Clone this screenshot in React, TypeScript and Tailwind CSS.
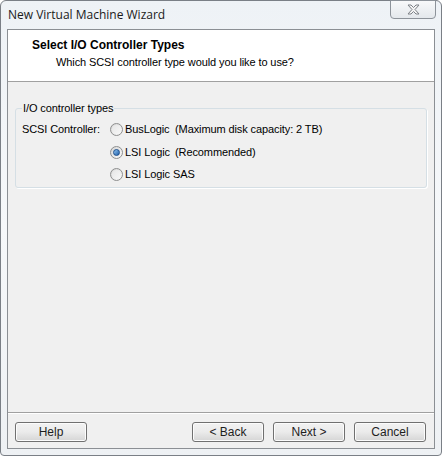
import React from "react";

const font = { fontFamily: '"Liberation Sans", Tahoma, Arial, sans-serif' };

function Radio({ checked }: { checked?: boolean }) {
  return (
    <span className="relative inline-flex h-[13px] w-[13px] shrink-0 items-center justify-center rounded-full border border-[#8e8f8f] bg-gradient-to-br from-[#d6d6d6] to-[#fbfbfb]">
      {checked ? (
        <span className="h-[7px] w-[7px] rounded-full border border-[#1b4e8c] bg-gradient-to-br from-[#8fc3f0] to-[#1e5fa8]" />
      ) : (
        <span className="h-[9px] w-[9px] rounded-full bg-gradient-to-br from-[#e6e6e6] to-[#f7f7f7]" />
      )}
    </span>
  );
}

function Button({ label, className = "" }: { label: string; className?: string }) {
  return (
    <div
      className={`flex h-[20px] w-[72px] shrink-0 items-center justify-center rounded-[3px] border border-[#707070] bg-gradient-to-b from-[#f2f2f2] via-[#ebebeb] to-[#d5d5d5] text-[12px] text-[#1e1e1e] shadow-[inset_0_0_0_1px_#fcfcfc] ${className}`}
    >
      {label}
    </div>
  );
}

export default function App() {
  return (
    <div className="h-[457px] w-[442px] bg-white" style={font}>
      <div className="flex h-[456px] w-[442px] flex-col rounded-t-[6px] rounded-b-[4px] border border-[#7a7f86] bg-gradient-to-b from-[#eef2f6] via-[#f6f8fa] to-[#eef1f4]">
        {/* title bar */}
        <div className="flex h-[28px] shrink-0 items-start justify-between">
          <span
            className="pl-[7px] pt-[5px] text-[12px] text-[#1a1a1a]"
            style={{ fontFamily: '"Open Sans", "Noto Sans", sans-serif' }}
          >
            New Virtual Machine Wizard
          </span>
          <div className="mr-[5px] mt-[-1px] flex h-[19px] w-[46px] items-center justify-center rounded-b-[4px] border border-[#8d939a] bg-gradient-to-b from-[#f8f9fa] to-[#e4e8ec]">
            <svg width="13" height="11" viewBox="0 0 13 11">
              <path
                d="M1 1 L4 1 L6.5 3.5 L9 1 L12 1 L8 5.5 L12 10 L9 10 L6.5 7.5 L4 10 L1 10 L5 5.5 Z"
                fill="#f4f4f4"
                stroke="#7d8187"
                strokeWidth="1"
                strokeLinejoin="round"
              />
            </svg>
          </div>
        </div>

        {/* client area */}
        <div className="mx-[6px] flex flex-1 flex-col border border-[#8b8f94] bg-[#f0f0f0]">
          <div className="h-[52px] shrink-0 border-b border-[#a0a0a0] bg-white pl-[24px] pt-[8px]">
            <div className="text-[12px] font-bold leading-[14px] text-black">Select I/O Controller Types</div>
            <div className="pl-[24px] pt-[3px] text-[11px] leading-[14px] tracking-[-0.1px] text-black">
              Which SCSI controller type would you like to use?
            </div>
          </div>

          <div className="flex flex-1 flex-col px-[7px] pt-[26px]">
            <div className="relative h-[80px] rounded-[3px] border border-[#d5dfe5] shadow-[1px_1px_0_#ffffff]">
              <span className="absolute left-[6px] top-[-8px] bg-[#f0f0f0] px-[1px] text-[11px] leading-[14px] tracking-[-0.1px] text-black">
                I/O controller types
              </span>
              <div className="flex whitespace-nowrap pl-[6px] pt-[14px] text-[11px] leading-[13px] tracking-[-0.1px] text-black">
                <span className="w-[88px] shrink-0">SCSI Controller:</span>
                <div className="flex flex-col gap-[9.5px]">
                  <div className="flex h-[13px] items-center">
                    <Radio />
                    <span className="ml-[2px] w-[50px] shrink-0">BusLogic</span>
                    <span>(Maximum disk capacity: 2 TB)</span>
                  </div>
                  <div className="flex h-[13px] items-center">
                    <Radio checked />
                    <span className="ml-[2px] w-[50px] shrink-0">LSI Logic</span>
                    <span>(Recommended)</span>
                  </div>
                  <div className="flex h-[13px] items-center">
                    <Radio />
                    <span className="ml-[2px]">LSI Logic SAS</span>
                  </div>
                </div>
              </div>
            </div>
            <div className="flex-1" />
          </div>

          <div className="shrink-0 border-t border-[#a0a0a0] shadow-[inset_0_1px_0_#ffffff]">
            <div className="flex h-[35px] items-start pl-[7px] pr-[8px] pt-[9px]">
              <Button label="Help" />
              <div className="flex-1" />
              <Button label="< Back" />
              <Button label="Next >" className="ml-[9px]" />
              <Button label="Cancel" className="ml-[9px]" />
            </div>
          </div>
        </div>
        <div className="h-[6px] shrink-0" />
      </div>
    </div>
  );
}
